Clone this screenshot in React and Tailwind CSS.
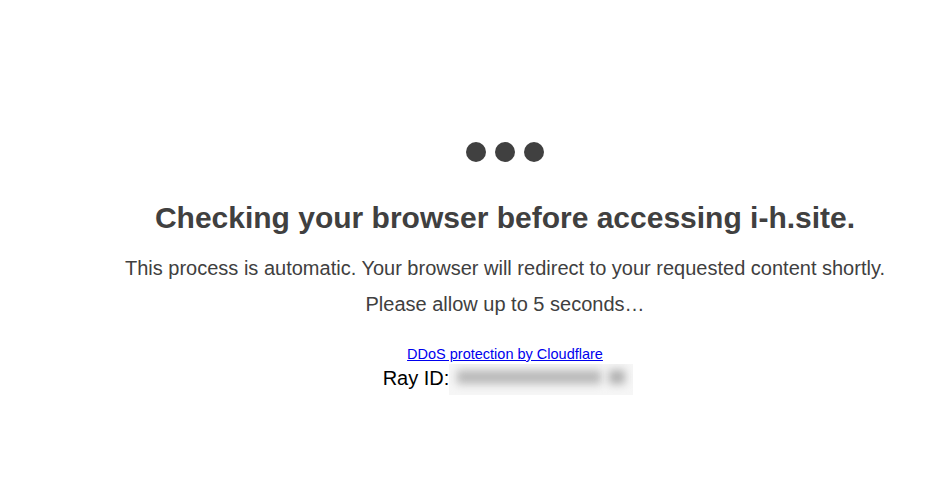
export default function App() {
  return (
    <div className="w-[939px] h-[477px] bg-white font-['Liberation_Sans',Arial,sans-serif] overflow-hidden">
      <div className="flex flex-col items-center pl-[71px] pt-[142px] text-center">
        <div className="flex gap-[9px]">
          <span className="block w-[20px] h-[20px] rounded-full bg-[#404040]"></span>
          <span className="block w-[20px] h-[20px] rounded-full bg-[#404040]"></span>
          <span className="block w-[20px] h-[20px] rounded-full bg-[#404040]"></span>
        </div>
        <h1 className="mt-[38px] text-[30px] leading-[36px] font-bold text-[#404040]">
          Checking your browser before accessing i-h.site.
        </h1>
        <p className="mt-[20px] text-[20px] leading-[24px] text-[#404040]">
          This process is automatic. Your browser will redirect to your requested content shortly.
        </p>
        <p className="mt-[12px] text-[20px] leading-[24px] text-[#404040]">
          Please allow up to 5 seconds…
        </p>
        <a href="#" className="mt-[30px] text-[14.5px] leading-[17px] text-[#0000ee] underline">
          DDoS protection by Cloudflare
        </a>
        <div className="mt-[1px] pl-[6px] flex items-start text-[20px] leading-[24px] text-black">
          <span className="pt-[2px]">Ray ID:</span>
          <span className="block w-[184px] h-[31px] bg-[#f6f6f6] relative overflow-hidden">
            <span className="absolute left-[8px] right-[32px] top-[6px] h-[14px] bg-[#b9b9b9] blur-[4px]"></span>
            <span className="absolute right-[8px] w-[16px] top-[6px] h-[14px] bg-[#b0b0b0] blur-[4px]"></span>
          </span>
        </div>
      </div>
    </div>
  );
}
